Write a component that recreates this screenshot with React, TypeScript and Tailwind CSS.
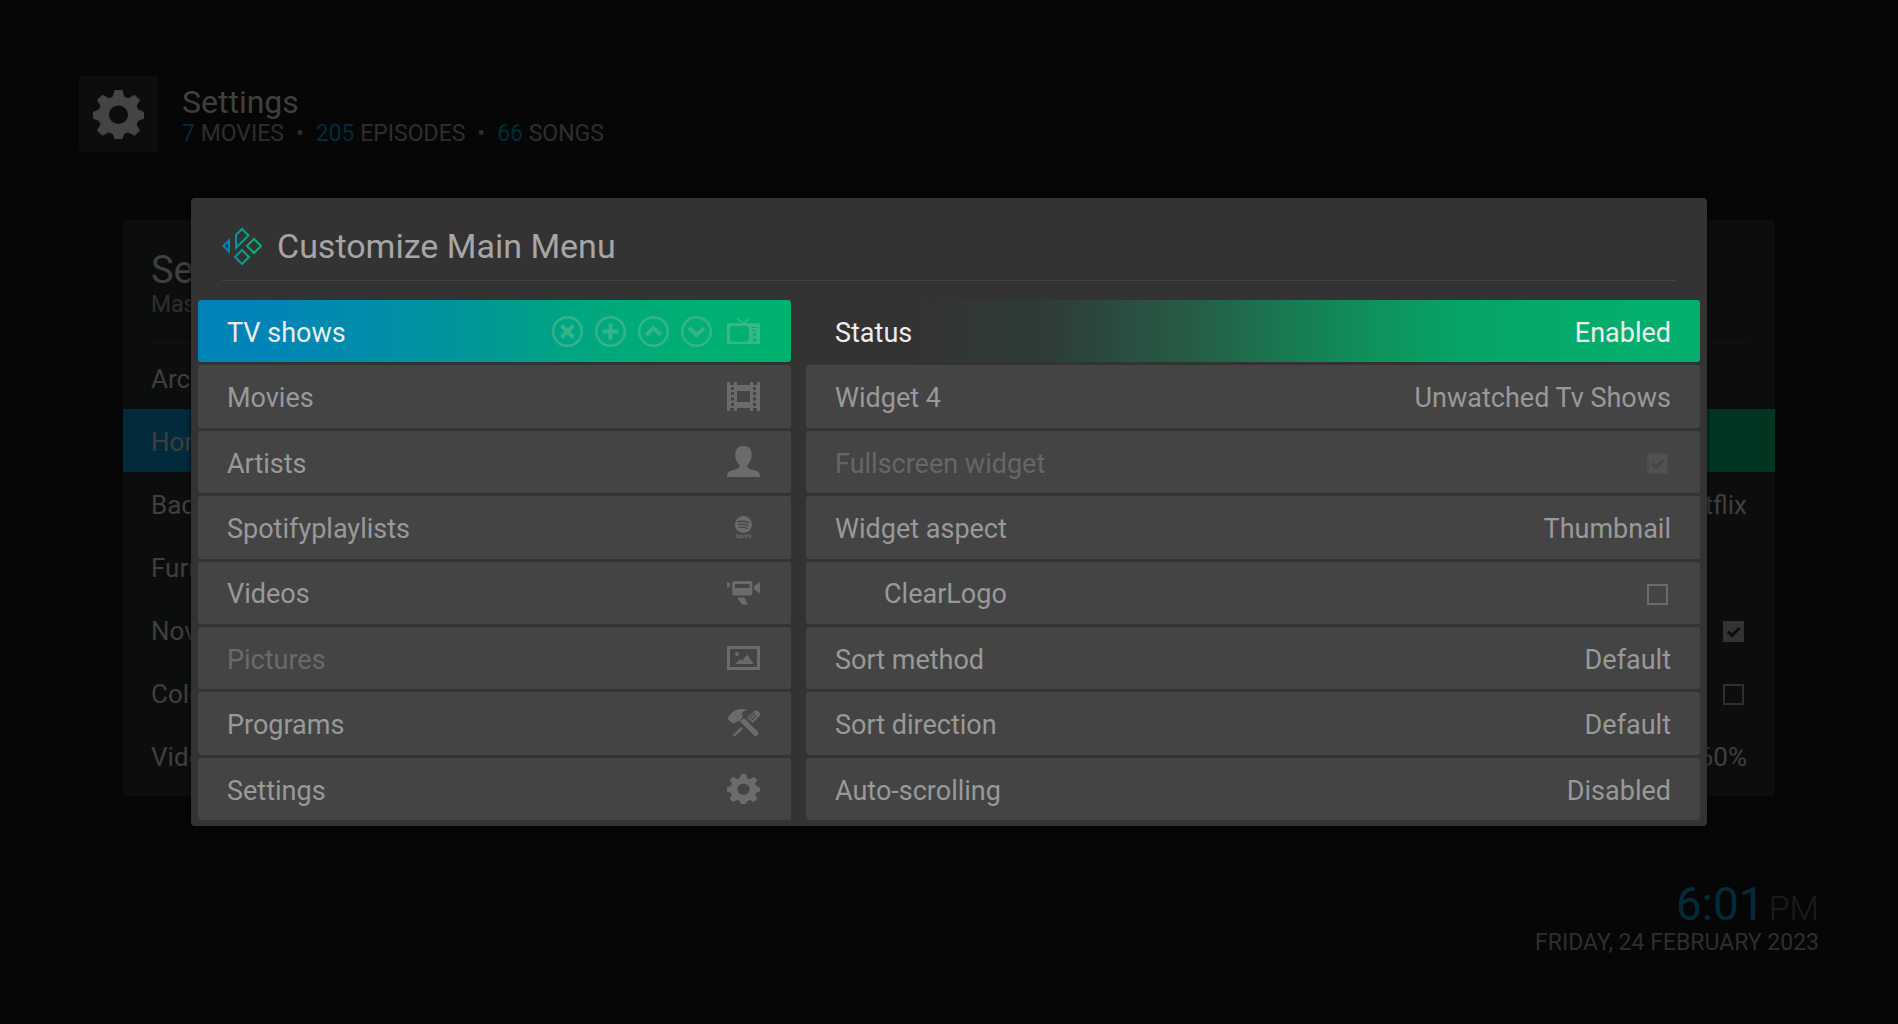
import type { ReactNode } from 'react'
import clsx from 'clsx'

const GEAR_PATH =
  'M13.6 0h4.8l1.3 4.4 2.4 1 4-2.3 3.4 3.4-2.2 4 1 2.3 3.7 1.6v4.2l-3.7 1.6-1 2.3 2.2 4-3.4 3.4-4-2.2-2.4 1L18.4 32h-4.8l-1.3-3.3-2.4-1-4 2.2-3.4-3.4 2.2-4-1-2.3L0 18.6v-4.2l3.7-1.6 1-2.3-2.2-4 3.4-3.4 4 2.3 2.4-1zM16 10.2a6 6 0 1 0 0 12 6 6 0 0 0 0-12z'

const GearIcon = ({ className }: { className: string }) => (
  <svg
    viewBox="0 0 32 32"
    preserveAspectRatio="none"
    className={className}
    fill="currentColor"
    fillRule="evenodd"
  >
    <path d={GEAR_PATH} />
  </svg>
)

const TvIcon = () => (
  <svg viewBox="0 0 33 26" className="w-[33px]" fill="currentColor" fillRule="evenodd">
    <path d="M0 5.200h33V26H0zM6 8c-2 0-3 1-3 3v9c0 2.500 1 3.700 3 3.700h13c2 0 3-1 3-3.700v-9c0-2-1-3-3-3zM25 9v1h5V9zm0 3v1h5v-1zm2.500 3a1.600 1.600 0 1 0 0 3.200 1.600 1.600 0 0 0 0-3.200zm0 5.200a1.800 1.800 0 1 0 0 3.600 1.800 1.800 0 0 0 0-3.600z" />
    <path d="M10.500.4l6 5.200 6-5.200" fill="none" stroke="currentColor" strokeWidth="1.300" />
  </svg>
)

const FilmIcon = () => (
  <svg viewBox="0 0 33 29" className="w-[33px]" fill="currentColor" fillRule="evenodd">
    <path d="M0 0h3v3h4V0h3v3h13V0h3v3h4V0h3v29h-3v-3h-4v3h-3v-3H10v3H7v-3H3v3H0zM10 9v11h13V9zM4 5v3h3V5zm0 5v3h3v-3zm0 5.500v3h3v-3zM4 21v3h3v-3zM26 5v3h3V5zm0 5v3h3v-3zm0 5.500v3h3v-3zm0 5.500v3h3v-3z" />
  </svg>
)

const PersonIcon = () => (
  <svg viewBox="0 0 33 31" className="w-[33px]" fill="currentColor">
    <path d="M16.500 0c5.500 0 8.300 3.300 8.300 8.500 0 4.500-1.800 8-4.300 10.500v2.200c1.500 1.800 4 2.300 7.500 3.200 3.500.9 5 2.300 5 6.600H0c0-4.300 1.500-5.700 5-6.600 3.500-.9 6-1.400 7.500-3.200V19C10 16.500 8.200 13 8.200 8.500 8.200 3.300 11 0 16.500 0z" />
  </svg>
)

const SpotifyIcon = () => (
  <span className="flex w-[33px] flex-col items-center">
    <svg viewBox="0 0 17 17" className="w-[17px]">
      <circle cx="8.500" cy="8.500" r="8.500" fill="currentColor" />
      <g fill="none" stroke="#444" strokeLinecap="round">
        <path d="M3.200 5.800c3.600-1 7.500-.7 10.800 1" strokeWidth="1.500" />
        <path d="M3.700 8.700c3.200-.9 6.400-.5 9.200 1" strokeWidth="1.300" />
        <path d="M4.200 11.400c2.600-.6 5.300-.3 7.600 1" strokeWidth="1.100" />
      </g>
    </svg>
    <span className="text-[5px] leading-[6px] font-bold">Spotify</span>
  </span>
)

const CameraIcon = () => (
  <svg viewBox="0 0 33 24" className="w-[33px]" fill="currentColor" fillRule="evenodd">
    <path d="M0 1l3 1.500v3L0 7zM7.500 0h15.500c1.500 0 2.300 1 2.300 2.300V12c0 1.500-1 2.500-2.300 2.500H7.500C6 14.500 5.200 13.500 5.200 12V2.300C5.200 1 6 0 7.500 0zM8 3v4h14.500V3zM33 1v11.500l-3-2-3-2v-3.500l3-2zM10 16.500h7.500l3.500 7h-6.200z" />
  </svg>
)

const PictureIcon = () => (
  <svg viewBox="0 0 33 24" className="w-[33px]" fill="currentColor" fillRule="evenodd">
    <path d="M0 0h33v24H0zM3 3v18h27V3z" />
    <path d="M10 6a2 2 0 1 1 0 4 2 2 0 0 1 0-4zM8 18l5.500-5 2 1.500L20 8.500l6.500 9.500z" />
  </svg>
)

const ToolsIcon = () => (
  <svg viewBox="0 0 33 28" className="w-[33px]" fill="currentColor">
    <path d="M1 8.500C4.500 3.500 8 0 14 0c3 0 5 .5 6.500 1.600-3 .2-5 1-5.500 3 0 1.500.5 2.300 1 3.200L12 12.500c-1.300-.6-2.500-.2-3.500 1L6 14.500l-5-4z" />
    <path d="M13 12.500l4-3.500L31 23c1.500 2-1.300 5-3.500 3.800z" />
    <path d="M14 18l2 2-8.200 7.300c-1 .6-2.300-.7-1.500-1.500z" />
    <path d="M20 9l7.500-7c2.500-1.500 6.500 1.500 5 5l-7 7z" />
    <path d="M22 9.500l6-5.700M24 11.500l6-5.700" stroke="#444" strokeWidth="1.100" />
  </svg>
)

const KodiLogo = () => (
  <svg viewBox="0 0 40 38" className="w-10" fill="none" stroke="url(#kodi)" strokeWidth="2">
    <defs>
      <linearGradient id="kodi" gradientUnits="userSpaceOnUse" x1="0" y1="19" x2="40" y2="19">
        <stop offset="0.15" stopColor="#0086b6" />
        <stop offset="0.75" stopColor="#06b070" />
      </linearGradient>
    </defs>
    <path d="M1.500 19L7 13.500v11zM14 20.800V8l6-6 6.500 6.500zM32 12l7 7-7 7-7-7zM20 23l7 7-7 7-7-7z" />
  </svg>
)

const actions = [
  { label: 'Remove', path: 'M9.500 9.500l12 12M21.500 9.500l-12 12' },
  { label: 'Add', path: 'M15.500 7.500v16M7.500 15.500h16' },
  { label: 'Move up', path: 'M8 19l7.500-7 7.500 7' },
  { label: 'Move down', path: 'M8 12l7.500 7 7.500-7' },
]

type CheckBoxProps = {
  label: string
  checked: boolean
  disabled?: boolean
  className: string
  tickClass?: string
}

const CheckBox = ({ label, checked, disabled, className, tickClass }: CheckBoxProps) => (
  <span className="relative mr-[3px] block size-[21px]">
    <input
      type="checkbox"
      aria-label={label}
      defaultChecked={checked}
      disabled={disabled}
      className={clsx('block size-[21px] appearance-none border-2', className)}
    />
    {checked && (
      <svg
        viewBox="0 0 21 21"
        className={clsx('pointer-events-none absolute inset-0', tickClass)}
        fill="none"
        stroke="currentColor"
        strokeWidth="3"
      >
        <path d="M5 10.500l4 4 7.500-7.500" />
      </svg>
    )}
  </span>
)

type MenuItem = { label: string; icon: ReactNode; active?: boolean; dimmed?: boolean }

const menuItems: MenuItem[] = [
  { label: 'TV shows', icon: <TvIcon />, active: true },
  { label: 'Movies', icon: <FilmIcon /> },
  { label: 'Artists', icon: <PersonIcon /> },
  { label: 'Spotifyplaylists', icon: <SpotifyIcon /> },
  { label: 'Videos', icon: <CameraIcon /> },
  { label: 'Pictures', icon: <PictureIcon />, dimmed: true },
  { label: 'Programs', icon: <ToolsIcon /> },
  { label: 'Settings', icon: <GearIcon className="h-[30px] w-[33px]" /> },
]

type Option = {
  label: string
  value?: string
  checked?: boolean
  active?: boolean
  disabled?: boolean
  indent?: boolean
}

const options: Option[] = [
  { label: 'Status', value: 'Enabled', active: true },
  { label: 'Widget 4', value: 'Unwatched Tv Shows' },
  { label: 'Fullscreen widget', checked: true, disabled: true },
  { label: 'Widget aspect', value: 'Thumbnail' },
  { label: 'ClearLogo', checked: false, indent: true },
  { label: 'Sort method', value: 'Default' },
  { label: 'Sort direction', value: 'Default' },
  { label: 'Auto-scrolling', value: 'Disabled' },
]

const skinSettings: Option[] = [
  { label: 'Arct' },
  { label: 'Hom', active: true },
  { label: 'Bac', value: 'tflix' },
  { label: 'Furn' },
  { label: 'Nov', checked: true },
  { label: 'Colo', checked: false },
  { label: 'Vide', value: '60%' },
]

const stats = [
  { count: 7, label: 'MOVIES' },
  { count: 205, label: 'EPISODES' },
  { count: 66, label: 'SONGS' },
]

const MenuRow = ({ label, icon, active, dimmed }: MenuItem) => (
  <li
    className={clsx(
      'flex items-center rounded-[3px] pr-[31px]',
      active
        ? 'bg-[linear-gradient(90deg,#0084b8_0%,#0084b8_10%,#008fa8_32%,#009798_46%,#00a681_64%,#00ae74_80%,#00b16f_100%)]'
        : 'bg-[#444]',
    )}
  >
    <button
      className={clsx(
        'h-full flex-1 pt-1 pl-[29px] text-left',
        active ? 'text-[#ededed]' : dimmed ? 'text-[#6a6a6a]' : 'text-[#999]',
      )}
    >
      {label}
    </button>
    {active && (
      <div className="mr-[15px] flex gap-3 text-[#35b48b]">
        {actions.map((action) => (
          <button key={action.label} aria-label={action.label}>
            <svg viewBox="0 0 31 31" className="w-[31px]" fill="none" stroke="currentColor">
              <circle cx="15.500" cy="15.500" r="14.300" strokeWidth="2.400" />
              <path d={action.path} strokeWidth="4" />
            </svg>
          </button>
        ))}
      </div>
    )}
    <span className={active ? 'text-[#35b988]' : 'text-[#6b6b6b]'}>{icon}</span>
  </li>
)

const OptionRow = ({ label, value, checked, active, disabled, indent }: Option) => {
  const rowClass = clsx(
    'flex h-full w-full items-center justify-between rounded-[3px] pt-1 pr-[29px]',
    indent ? 'pl-[78px]' : 'pl-[29px]',
    active
      ? 'bg-[linear-gradient(90deg,#333_12%,#2e3d36_27%,#265c46_43%,#187a52_54%,#0e935c_64%,#06a567_74%,#04ae6c_92%)] text-[#ededed]'
      : disabled
        ? 'bg-[#444] text-[#666]'
        : 'bg-[#444] text-[#999]',
  )

  if (checked !== undefined) {
    return (
      <label className={rowClass}>
        <span>{label}</span>
        <CheckBox
          label={label}
          checked={checked}
          disabled={disabled}
          className={checked ? 'border-[#4d4d4d] bg-[#525252]' : 'border-[#6b6b6b]'}
          tickClass="text-[#444]"
        />
      </label>
    )
  }

  return (
    <button className={rowClass}>
      <span>{label}</span>
      <span>{value}</span>
    </button>
  )
}

const CustomizeMenuDialog = () => (
  <div className="absolute inset-0 flex items-center">
    <div
      role="dialog"
      aria-labelledby="dialog-title"
      className="mx-[191px] w-full rounded-[4px] bg-[#333] px-[7px] pb-1.5 shadow-[0_0_4px_#000]"
    >
      <div className="mx-6 flex h-[83px] items-center gap-[15px] border-b border-[#444] pt-[14px]">
        <KodiLogo />
        <h2 id="dialog-title" className="text-[34px] leading-10 text-[#a6a6a6]">
          Customize Main Menu
        </h2>
      </div>
      <div className="mt-[19px] flex min-h-[520px] gap-[15px] text-[27px]">
        <ul className="grid w-[593px] shrink-0 auto-rows-fr gap-[3px]">
          {menuItems.map((item) => (
            <MenuRow key={item.label} {...item} />
          ))}
        </ul>
        <ul className="grid flex-1 auto-rows-fr gap-[3px]">
          {options.map((option) => (
            <li key={option.label}>
              <OptionRow {...option} />
            </li>
          ))}
        </ul>
      </div>
    </div>
  </div>
)

const App = () => (
  <div className="relative min-h-screen bg-[#060606] pt-[76px] font-['Roboto',sans-serif] text-[#3f3f3f]">
    <header className="flex gap-6 px-[79px]">
      <div className="flex h-[76px] w-[79px] items-center justify-center rounded-[3px] bg-[#0c0e0d] text-[#444]">
        <GearIcon className="h-[49px] w-[51px]" />
      </div>
      <div className="pt-[7px]">
        <h1 className="text-[32px] leading-[38px]">Settings</h1>
        <ul className="flex text-[23px] leading-[26px] text-[#2e2e2e]">
          {stats.map((stat, i) => (
            <li key={stat.label} className="flex">
              {i > 0 && <span className="mx-3">•</span>}
              <span>
                <span className="text-[#012a3b]">{stat.count}</span> {stat.label}
              </span>
            </li>
          ))}
        </ul>
      </div>
    </header>

    <section className="mx-[123px] mt-[68px] rounded-[4px] bg-[#0c0e0d] pb-[9px]">
      <div className="mx-7 h-[123px] border-b border-[#141615] pt-7">
        <h2 className="text-[38px] leading-[44px]">Se</h2>
        <p className="text-[23px] leading-[26px] text-[#2e2e2e]">Mas</p>
      </div>
      <ul className="text-[26px]">
        {skinSettings.map(({ label, value, checked, active }) => (
          <li
            key={label}
            className={clsx(
              'flex h-[63px] items-center justify-between px-7 pt-1 first:mt-[3px]',
              active && 'bg-[linear-gradient(90deg,#012a3b_10%,#003621_90%)]',
            )}
          >
            <span>{label}</span>
            {checked !== undefined ? (
              <CheckBox
                label={label}
                checked={checked}
                className={checked ? 'border-[#333] bg-[#333]' : 'border-[#2f2f2f]'}
                tickClass="text-[#0c0e0d]"
              />
            ) : (
              value && <span>{value}</span>
            )}
          </li>
        ))}
      </ul>
    </section>

    <footer className="mt-[86px] flex flex-col items-end pr-[79px]">
      <p className="flex items-baseline gap-1 text-[46px] leading-[44px] text-[#012a3b]">
        6:01 <span className="text-[34px] font-light text-[#1c1c1c]">PM</span>
      </p>
      <p className="text-[23px] leading-[26px] text-[#2e2e2e]">FRIDAY, 24 FEBRUARY 2023</p>
    </footer>

    <CustomizeMenuDialog />
  </div>
)

export default App
